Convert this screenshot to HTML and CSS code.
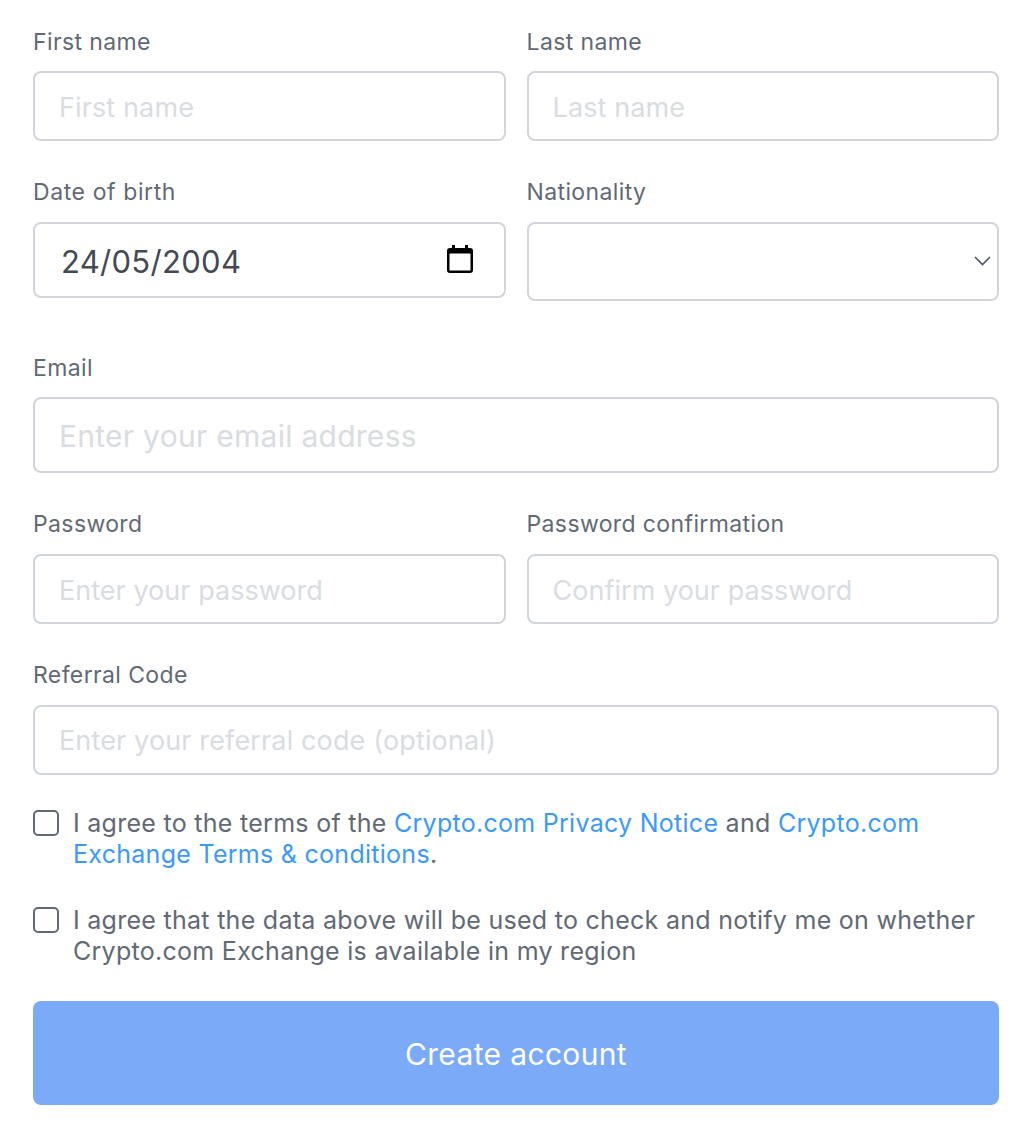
FILE: index.html
```html
<!DOCTYPE html>
<html lang="en">
<head>
<meta charset="utf-8">
<title>Create account</title>
<link rel="stylesheet" href="styles.css">
</head>
<body>
<form class="form">
  <div class="row row-names">
    <div class="field"><label class="label">First name</label><input class="input" type="text" placeholder="First name"></div>
    <div class="field"><label class="label">Last name</label><input class="input" type="text" placeholder="Last name"></div>
  </div>
  <div class="row row-birth">
    <div class="field">
      <label class="label label-wide">Date of birth</label>
      <div class="date-wrap">
        <input class="input input-date" type="text" value="24/05/2004">
        <svg class="cal" viewBox="0 1 26 28" width="26" height="28" aria-hidden="true">
          <path d="M5 1h3v3h10V1h3v3h2a3 3 0 0 1 3 3v19a3 3 0 0 1-3 3H3a3 3 0 0 1-3-3V7a3 3 0 0 1 3-3h2z" fill="#000"/>
          <rect x="2.500" y="9.500" width="21" height="17" rx=".5" fill="#fff"/>
        </svg>
      </div>
    </div>
    <div class="field">
      <label class="label">Nationality</label>
      <div class="select-wrap">
        <select class="input input-select"><option></option></select>
        <svg class="chev" viewBox="0 0 17 10" width="17" height="10" aria-hidden="true"><path d="M1 1l7.500 7.500L16 1" fill="none" stroke="#4b5563" stroke-width="1.600"/></svg>
      </div>
    </div>
  </div>
  <div class="row row-email">
    <div class="field"><label class="label">Email</label><input class="input input-large" type="text" placeholder="Enter your email address"></div>
  </div>
  <div class="row row-pass">
    <div class="field"><label class="label">Password</label><input class="input input-pass" type="password" placeholder="Enter your password"></div>
    <div class="field"><label class="label">Password confirmation</label><input class="input input-pass" type="password" placeholder="Confirm your password"></div>
  </div>
  <div class="row row-ref">
    <div class="field"><label class="label">Referral Code</label><input class="input input-ref" type="text" placeholder="Enter your referral code (optional)"></div>
  </div>
  <div class="check check-terms">
    <span class="box"></span>
    <p class="check-text">I agree to the terms of the <a href="#">Crypto.com Privacy Notice</a> and <a href="#">Crypto.com Exchange Terms &amp; conditions</a>.</p>
  </div>
  <div class="check check-data">
    <span class="box"></span>
    <p class="check-text">I agree that the data above will be used to check and notify me on whether Crypto.com Exchange is available in my region</p>
  </div>
  <button class="submit" type="button">Create account</button>
</form>
</body>
</html>
```
FILE: styles.css
```css
* { box-sizing: border-box; }
html, body { margin: 0; padding: 0; background: #fff; }
body { font-family: Inter, "Liberation Sans", sans-serif; color: #616975; }
.form { width: 1030px; height: 1142px; padding: 27px 31px 0 33px; display: flex; flex-direction: column; }
.row { display: flex; gap: 21px; }
.field { flex: 1 1 0; min-width: 0; display: flex; flex-direction: column; }
.label { font-size: 23px; line-height: 30px; height: 30px; margin-bottom: 14px; letter-spacing: .38px; color: #616975; }
.label-wide { letter-spacing: .6px; }
.input { width: 100%; height: 70px; border: 2px solid #d1d5db; border-radius: 8px; background: #fff; padding: 2px 24px 0; font: 27px Inter, "Liberation Sans", sans-serif; letter-spacing: .12px; color: #4b5563; outline: none; }
.input::placeholder { color: #d9dce1; opacity: 1; }
.input-large { height: 76px; font-size: 30px; letter-spacing: .27px; }
.input-pass { letter-spacing: .03px; }
.input-ref { padding-top: 0; letter-spacing: .14px; }
.row-birth { margin-top: 36px; }
.row-birth .label, .row-pass .label, .row-ref .label { margin-bottom: 15px; }
.date-wrap, .select-wrap { position: relative; }
.input-date { height: 76px; font-size: 31px; padding-left: 26px; letter-spacing: .3px; color: #434a54; }
.cal { position: absolute; right: 33px; top: 23px; }
.input-select { height: 79px; appearance: none; -webkit-appearance: none; }
.chev { position: absolute; right: 8px; top: 34px; }
.row-email { margin-top: 52px; }
.row-pass { margin-top: 36px; }
.row-ref { margin-top: 36px; }
.check { display: flex; gap: 14px; align-items: flex-start; }
.check-terms { margin-top: 33px; }
.check-data { margin-top: 35px; }
.box { flex: none; width: 26px; height: 26px; margin-top: 2px; border: 2px solid #616975; border-radius: 5px; background: #fff; }
.check-text { margin: 0; font-size: 25px; line-height: 31px; letter-spacing: .28px; color: #616975; }
.check-text a { color: #3b99fc; text-decoration: none; }
.submit { margin-top: 34px; width: 100%; height: 104px; border: 0; border-radius: 8px; padding-top: 2px; background: #7aaaf8; color: #fff; font: 30px Inter, "Liberation Sans", sans-serif; letter-spacing: .35px; }
```
